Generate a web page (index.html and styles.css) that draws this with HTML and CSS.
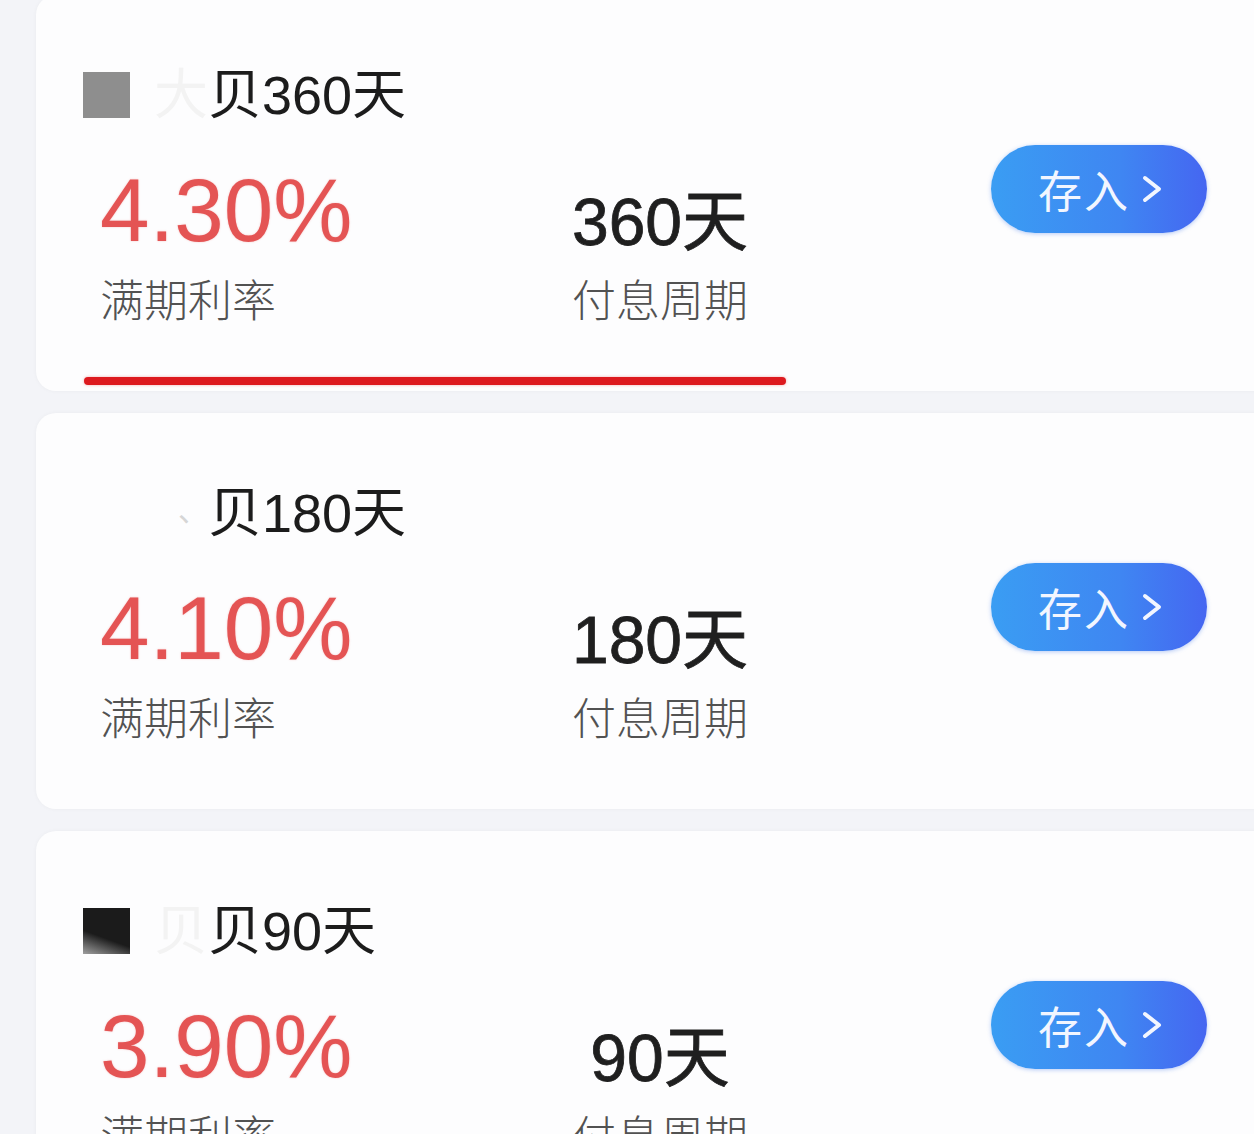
FILE: index.html
```html
<!DOCTYPE html>
<html lang="zh-CN">
<head>
    <meta charset="UTF-8">
    <meta name="viewport" content="width=device-width, initial-scale=1.0">
    <title>定期存款</title>
    <link rel="stylesheet" href="styles.css">
</head>
<body>
    <div class="product-list">
        <div class="card">
            <div class="card-main">
                <div class="title"><span class="mask mask-gray"></span><span class="ghost ghost-short">大</span><span class="name">贝360天</span></div>
                <div class="stats">
                    <div class="stat stat-rate">
                        <div class="rate">4.30%</div>
                        <div class="label">满期利率</div>
                    </div>
                    <div class="stat stat-period">
                        <div class="period">360天</div>
                        <div class="label">付息周期</div>
                    </div>
                </div>
            </div>
            <button class="deposit-btn">存入<svg class="chevron" viewBox="0 0 24 30"><polyline points="5,4 19,15 5,26"/></svg></button>
            <div class="underline"></div>
        </div>

        <div class="card">
            <div class="card-main">
                <div class="title"><span class="ghost ghost-long">、</span><span class="name">贝180天</span></div>
                <div class="stats">
                    <div class="stat stat-rate">
                        <div class="rate">4.10%</div>
                        <div class="label">满期利率</div>
                    </div>
                    <div class="stat stat-period">
                        <div class="period">180天</div>
                        <div class="label">付息周期</div>
                    </div>
                </div>
            </div>
            <button class="deposit-btn">存入<svg class="chevron" viewBox="0 0 24 30"><polyline points="5,4 19,15 5,26"/></svg></button>
        </div>

        <div class="card">
            <div class="card-main">
                <div class="title"><span class="mask mask-dark"></span><span class="ghost ghost-short">贝</span><span class="name">贝90天</span></div>
                <div class="stats">
                    <div class="stat stat-rate">
                        <div class="rate">3.90%</div>
                        <div class="label">满期利率</div>
                    </div>
                    <div class="stat stat-period">
                        <div class="period">90天</div>
                        <div class="label">付息周期</div>
                    </div>
                </div>
            </div>
            <button class="deposit-btn">存入<svg class="chevron" viewBox="0 0 24 30"><polyline points="5,4 19,15 5,26"/></svg></button>
        </div>
    </div>
</body>
</html>
```

FILE: styles.css
```css
body {
    margin: 0;
    background-color: #f3f4f8;
    font-family: 'Liberation Sans', 'Noto Sans CJK SC', sans-serif;
    overflow: hidden;
}

.product-list {
    margin-top: -5px;
    padding-left: 36px;
}

.card {
    position: relative;
    display: flex;
    height: 396px;
    box-sizing: border-box;
    margin: 0 -30px 22px 0;
    padding: 65px 77px 0 47px;
    background-color: #fdfdfe;
    border-radius: 20px;
    box-shadow: 0 0 4px rgba(0, 0, 0, 0.04);
}

.card-main {
    flex: 1;
}

.title {
    display: flex;
    align-items: center;
    height: 70px;
    font-size: 54px;
    color: #1c1c1c;
}

.name {
    padding-bottom: 10px;
}

.mask {
    display: inline-block;
    width: 47px;
    height: 46px;
}

.mask-gray {
    background-color: #8e8e8e;
}

.mask-dark {
    background: linear-gradient(200deg, #1b1b1b 62%, #a0a0a0);
}

.ghost {
    display: inline-block;
    padding-bottom: 10px;
    color: #f3f3f3;
    overflow: hidden;
    white-space: nowrap;
    text-align: right;
}

.ghost-short {
    width: 78px;
}

.ghost-long {
    width: 125px;
    color: #d6d6d6;
    font-size: 30px;
}

.stats {
    display: flex;
    margin-top: 30px;
    padding-left: 17px;
}

.stat-rate {
    width: 440px;
}

.stat-period {
    width: 240px;
    text-align: center;
}

.rate {
    height: 100px;
    line-height: 100px;
    font-size: 89px;
    color: #e45454;
    text-shadow: 0 0 2px rgba(228, 84, 84, 0.35);
}

.period {
    margin-top: 24px;
    height: 76px;
    line-height: 76px;
    font-size: 66px;
    color: #1f1f1f;
    -webkit-text-stroke: 0.8px #1f1f1f;
}

.label {
    margin-top: 12px;
    height: 60px;
    line-height: 60px;
    font-size: 44px;
    font-weight: 300;
    color: #525252;
}

.deposit-btn {
    display: flex;
    align-items: center;
    justify-content: center;
    gap: 10px;
    width: 216px;
    height: 88px;
    margin-top: 85px;
    padding: 0 0 0 4px;
    border: none;
    border-radius: 44px;
    background: linear-gradient(90deg, #3a9df3, #3f86f2 60%, #4566f1);
    box-shadow: 0 1px 4px rgba(50, 110, 230, 0.35);
    font-family: inherit;
    font-size: 44px;
    letter-spacing: 2px;
    color: #f2f6ff;
}

.chevron {
    width: 24px;
    height: 30px;
}

.chevron polyline {
    fill: none;
    stroke: #f2f6ff;
    stroke-width: 4;
    stroke-linecap: round;
    stroke-linejoin: round;
}

.underline {
    position: absolute;
    left: 48px;
    top: 382px;
    width: 702px;
    height: 8px;
    border-radius: 4px;
    background-color: #dd1a1f;
    box-shadow: 0 0 3px rgba(220, 20, 20, 0.35);
}
```
